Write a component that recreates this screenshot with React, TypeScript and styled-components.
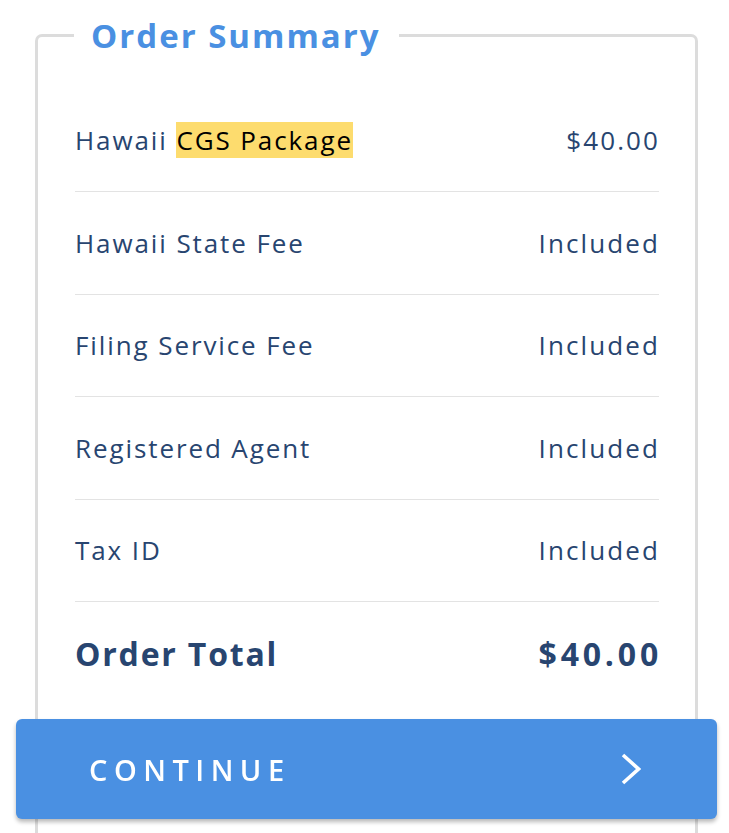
import React from "react";
import styled, { createGlobalStyle } from "styled-components";

const GlobalStyle = createGlobalStyle`
  html, body {
    margin: 0;
    padding: 0;
    background: #ffffff;
  }
  * { box-sizing: border-box; }
`;

const Page = styled.div`
  padding: 15.5px 31px 0 35px;
  font-family: "Open Sans", "Liberation Sans", sans-serif;
  color: #284570;
`;

const Card = styled.fieldset`
  margin: 0;
  min-width: 0;
  border: 3px solid #dcdcdc;
  border-radius: 7px;
  padding: 34px 36px 160px 37px;
`;

const Legend = styled.legend`
  margin-left: -1px;
  padding: 0 18px 0 17px;
  font-size: 33px;
  line-height: 40px;
  font-weight: 700;
  color: #4a90e2;
  letter-spacing: 2px;
`;

const Row = styled.div<{ $total?: boolean }>`
  display: flex;
  justify-content: space-between;
  align-items: center;
  height: 102.5px;
  border-bottom: ${(p) => (p.$total ? "none" : "1px solid #e3e3e3")};
  font-size: ${(p) => (p.$total ? "32px" : "26px")};
  font-weight: ${(p) => (p.$total ? 700 : 400)};
  letter-spacing: ${(p) => (p.$total ? "1.8px" : "1.9px")};
  color: #284570;
`;

const Label = styled.span``;

const Value = styled.span<{ $total?: boolean }>`
  letter-spacing: ${(p) => (p.$total ? "3.8px" : "2.1px")};
  margin-right: ${(p) => (p.$total ? "-3px" : "-1px")};
`;

const Highlight = styled.span`
  background: #fddc6e;
  color: #000000;
`;

const ContinueButton = styled.button`
  position: fixed;
  left: 16px;
  right: 12px;
  bottom: 14px;
  height: 100px;
  border: none;
  border-radius: 6px;
  background: #4a90e2;
  box-shadow: 0 3px 4px rgba(0, 0, 0, 0.28);
  display: flex;
  align-items: center;
  justify-content: space-between;
  padding: 0 76px 0 73px;
  color: #ffffff;
  font-family: "Open Sans", "Liberation Sans", sans-serif;
  font-size: 29px;
  font-weight: 600;
  letter-spacing: 6.5px;
  cursor: pointer;
`;

const Chevron = () => (
  <svg width="20" height="32" viewBox="0 0 20 32" fill="none">
    <polyline
      points="2,2 17.5,16 2,30"
      stroke="#ffffff"
      strokeWidth="3.6"
      strokeLinecap="butt"
      strokeLinejoin="miter"
    />
  </svg>
);

const items = [
  { label: "Hawaii State Fee", value: "Included" },
  { label: "Filing Service Fee", value: "Included" },
  { label: "Registered Agent", value: "Included" },
  { label: "Tax ID", value: "Included" },
];

export default function App() {
  return (
    <>
      <GlobalStyle />
      <Page>
        <Card>
          <Legend>Order Summary</Legend>
          <Row>
            <Label>
              Hawaii <Highlight>CGS Package</Highlight>
            </Label>
            <Value>$40.00</Value>
          </Row>
          {items.map((it) => (
            <Row key={it.label}>
              <Label>{it.label}</Label>
              <Value>{it.value}</Value>
            </Row>
          ))}
          <Row $total>
            <Label>Order Total</Label>
            <Value $total>$40.00</Value>
          </Row>
        </Card>
        <ContinueButton>
          <span>CONTINUE</span>
          <Chevron />
        </ContinueButton>
      </Page>
    </>
  );
}
